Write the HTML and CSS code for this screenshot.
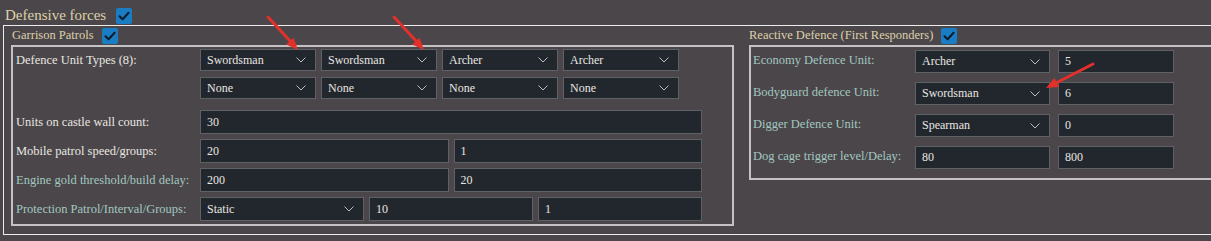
FILE: index.html
```html
<!DOCTYPE html>
<html lang="en">
<head>
  <meta charset="UTF-8" />
  <title>Defensive forces</title>
  <link rel="stylesheet" href="styles.css">
</head>
<body>
  <div class="title-row">
    <span>Defensive forces</span>
    <span class="check"><svg viewBox="0 0 16 16"><path d="M3.5 8.2 L6.6 11.2 L12.6 4.8"/></svg></span>
  </div>

  <div class="forces-box">
    <section class="garrison">
      <div class="sub-title">
        <span>Garrison Patrols</span>
        <span class="check"><svg viewBox="0 0 16 16"><path d="M3.5 8.2 L6.6 11.2 L12.6 4.8"/></svg></span>
      </div>
      <div class="panel garrison-panel">
        <div class="row row-types">
          <span class="lbl">Defence Unit Types (8):</span>
          <div class="type-grid">
            <div class="select"><span>Swordsman</span><svg viewBox="0 0 10 6"><path d="M0.5 0.5 L5 5 L9.5 0.5"/></svg></div>
            <div class="select"><span>Swordsman</span><svg viewBox="0 0 10 6"><path d="M0.5 0.5 L5 5 L9.5 0.5"/></svg></div>
            <div class="select"><span>Archer</span><svg viewBox="0 0 10 6"><path d="M0.5 0.5 L5 5 L9.5 0.5"/></svg></div>
            <div class="select"><span>Archer</span><svg viewBox="0 0 10 6"><path d="M0.5 0.5 L5 5 L9.5 0.5"/></svg></div>
            <div class="select"><span>None</span><svg viewBox="0 0 10 6"><path d="M0.5 0.5 L5 5 L9.5 0.5"/></svg></div>
            <div class="select"><span>None</span><svg viewBox="0 0 10 6"><path d="M0.5 0.5 L5 5 L9.5 0.5"/></svg></div>
            <div class="select"><span>None</span><svg viewBox="0 0 10 6"><path d="M0.5 0.5 L5 5 L9.5 0.5"/></svg></div>
            <div class="select"><span>None</span><svg viewBox="0 0 10 6"><path d="M0.5 0.5 L5 5 L9.5 0.5"/></svg></div>
          </div>
        </div>

        <div class="row">
          <span class="lbl">Units on castle wall count:</span>
          <div class="fields cols-1">
            <div class="input">30</div>
          </div>
        </div>

        <div class="row">
          <span class="lbl">Mobile patrol speed/groups:</span>
          <div class="fields cols-2">
            <div class="input">20</div>
            <div class="input">1</div>
          </div>
        </div>

        <div class="row">
          <span class="lbl teal">Engine gold threshold/build delay:</span>
          <div class="fields cols-2">
            <div class="input">200</div>
            <div class="input">20</div>
          </div>
        </div>

        <div class="row">
          <span class="lbl teal">Protection Patrol/Interval/Groups:</span>
          <div class="fields cols-3">
            <div class="select"><span>Static</span><svg viewBox="0 0 10 6"><path d="M0.5 0.5 L5 5 L9.5 0.5"/></svg></div>
            <div class="input">10</div>
            <div class="input">1</div>
          </div>
        </div>
      </div>
    </section>

    <section class="reactive">
      <div class="sub-title">
        <span>Reactive Defence (First Responders)</span>
        <span class="check"><svg viewBox="0 0 16 16"><path d="M3.5 8.2 L6.6 11.2 L12.6 4.8"/></svg></span>
      </div>
      <div class="panel reactive-panel">
        <div class="r-row">
          <span class="lbl teal">Economy Defence Unit:</span>
          <div class="select"><span>Archer</span><svg viewBox="0 0 10 6"><path d="M0.5 0.5 L5 5 L9.5 0.5"/></svg></div>
          <div class="input">5</div>
        </div>
        <div class="r-row">
          <span class="lbl teal">Bodyguard defence Unit:</span>
          <div class="select"><span>Swordsman</span><svg viewBox="0 0 10 6"><path d="M0.5 0.5 L5 5 L9.5 0.5"/></svg></div>
          <div class="input">6</div>
        </div>
        <div class="r-row">
          <span class="lbl teal">Digger Defence Unit:</span>
          <div class="select"><span>Spearman</span><svg viewBox="0 0 10 6"><path d="M0.5 0.5 L5 5 L9.5 0.5"/></svg></div>
          <div class="input">0</div>
        </div>
        <div class="r-row">
          <span class="lbl teal">Dog cage trigger level/Delay:</span>
          <div class="input">80</div>
          <div class="input">800</div>
        </div>
      </div>
    </section>
  </div>

  <!-- annotation arrows drawn over the form -->
  <svg class="arrows" width="1211" height="241" viewBox="0 0 1211 241">
    <line x1="268" y1="17" x2="291" y2="42" />
    <polygon points="298,50 286.2,44.5 293.6,37.7" />
    <line x1="394" y1="17" x2="417" y2="42" />
    <polygon points="424,50 412.2,44.5 419.6,37.7" />
    <line x1="1093" y1="64" x2="1056" y2="83" />
    <polygon points="1046,88 1054.4,78 1059,87" />
  </svg>
</body>
</html>
```

FILE: styles.css
```css
:root {
  --bg: #4b4649;
  --field-bg: #22272d;
  --field-border: #5e6267;
  --text: #e8e6e2;
  --teal: #a2c7c1;
  --beige: #ddd1a9;
}

* {
  box-sizing: border-box;
}

html, body {
  margin: 0;
  padding: 0;
  width: 100%;
  height: 100%;
  overflow: hidden;
  background: var(--bg);
  font-family: "Liberation Serif", "DejaVu Serif", serif;
  color: var(--text);
}

body {
  position: relative;
}

.title-row {
  height: 25px;
  padding: 6px 0 0 5px;
  display: flex;
  align-items: center;
  gap: 10px;
  font-size: 15px;
  color: var(--beige);
}

.check {
  width: 16px;
  height: 16px;
  border-radius: 2px;
  background: #1a7cc2;
  display: inline-flex;
}

.check svg {
  width: 16px;
  height: 16px;
  fill: none;
  stroke: #0d1b2b;
  stroke-width: 2;
  stroke-linecap: round;
  stroke-linejoin: round;
}

.forces-box {
  margin-left: 3px;
  border: 1px solid #ececec;
  border-right: none;
  height: 210px;
  padding: 0 0 7px 7px;
  display: flex;
  gap: 15px;
}

.sub-title {
  height: 19px;
  display: flex;
  align-items: center;
  gap: 8px;
  font-size: 12.5px;
  color: var(--beige);
}

.garrison .sub-title {
  padding-left: 1px;
}

.panel {
  border: 2px solid #c4c2c2;
}

.garrison-panel {
  width: 723px;
  padding: 2px 0 3px 3px;
  display: flex;
  flex-direction: column;
  gap: 5px;
}

.lbl {
  font-size: 12.5px;
  color: var(--text);
  white-space: nowrap;
}

.lbl.teal {
  color: var(--teal);
}

.row {
  display: flex;
  align-items: center;
  height: 24px;
}

.row .lbl {
  width: 184px;
  flex: none;
}

.row-types {
  height: auto;
  align-items: flex-start;
  margin-bottom: 6px;
}

.row-types .lbl {
  line-height: 22px;
}

.type-grid {
  display: grid;
  grid-template-columns: repeat(4, 116px);
  grid-auto-rows: 22px;
  column-gap: 5px;
  row-gap: 6px;
}

.fields {
  width: 502px;
  height: 24px;
  display: grid;
  gap: 5px;
}

.cols-1 { grid-template-columns: 1fr; }
.cols-2 { grid-template-columns: 1fr 1fr; }
.cols-3 { grid-template-columns: 1fr 1fr 1fr; }

.input, .select {
  background: var(--field-bg);
  border: 1px solid var(--field-border);
  font-size: 12px;
  color: var(--text);
  display: flex;
  align-items: center;
  padding: 0 9px 0 6px;
}

.select {
  justify-content: space-between;
}

.select svg {
  width: 10px;
  height: 6px;
  fill: none;
  stroke: #b9bdc1;
  stroke-width: 1;
}

.reactive {
  flex: 1;
}

.reactive-panel {
  border-right: none;
  padding: 3px 0 9px 2px;
  display: flex;
  flex-direction: column;
  gap: 9px;
}

.r-row {
  display: grid;
  grid-template-columns: 154px 135px 116px;
  column-gap: 8px;
  height: 23px;
  align-items: stretch;
}

.r-row .lbl {
  line-height: 21px;
}

.arrows {
  position: absolute;
  top: 0;
  left: 0;
  pointer-events: none;
}

.arrows line {
  stroke: #e2302a;
  stroke-width: 3;
  stroke-linecap: round;
}

.arrows polygon {
  fill: #e2302a;
}
```
